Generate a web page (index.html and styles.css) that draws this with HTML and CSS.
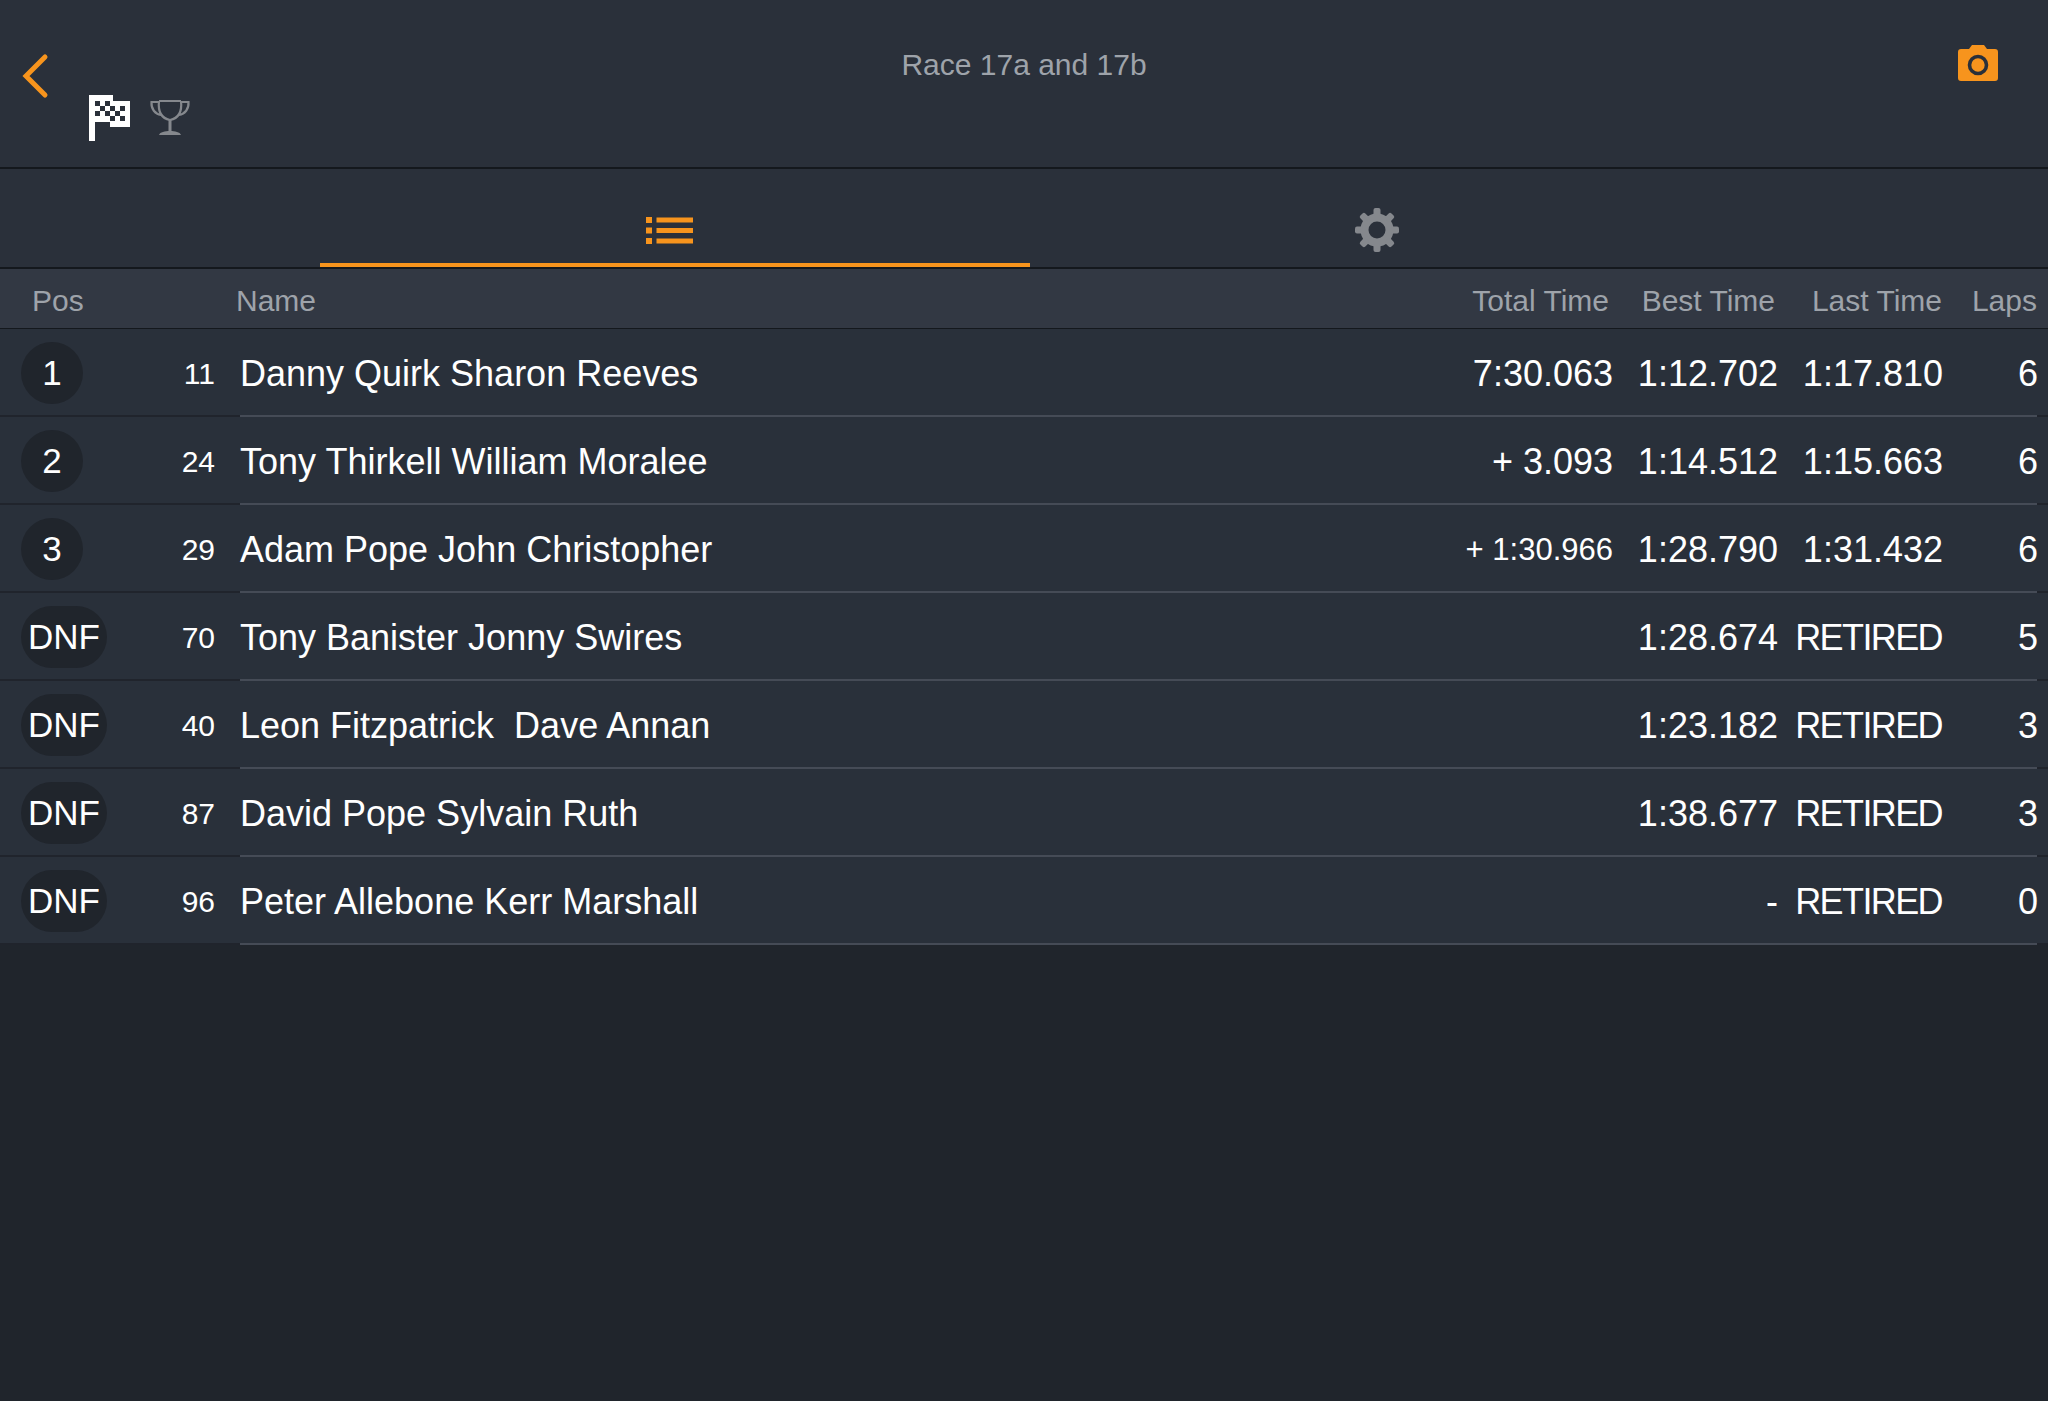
FILE: index.html
```html
<!DOCTYPE html>
<html lang="en">
<head>
<meta charset="utf-8">
<title>Race 17a and 17b</title>
<link rel="stylesheet" href="styles.css">
</head>
<body>
<header class="topbar">
  <svg class="back" width="30" height="48" viewBox="0 0 30 48"><path d="M24 5 L5 24 L24 43" fill="none" stroke="#f7941d" stroke-width="5" stroke-linecap="round" stroke-linejoin="miter"/></svg>
  <div class="modes">
    <svg class="flag" width="41" height="46" viewBox="0 0 41 46" shape-rendering="crispEdges">
      <path fill="#fff" d="M0 0H24V6H41V32H21V27H6V46H0Z"/>
      <path fill="#2a303a" d="M6 6h5v5H6zM16 6h5v5h-5zM11 11h5v5h-5zM21 11h5v5h-5zM31 11h5v5h-5zM6 16h5v5H6zM16 16h5v5h-5zM26 16h5v5h-5zM21 21h5v5h-5zM31 21h5v5h-5z"/>
    </svg>
    <svg class="trophy" width="40" height="38" viewBox="0 0 40 38">
      <path fill="none" stroke="#85888d" stroke-width="2.2" d="M9 2H31M9 2C8 11 10 19 20 21C30 19 32 11 31 2M9 3H1.5C1 10 5 15 11 16M31 3H38.5C39 10 35 15 29 16"/>
      <path fill="#85888d" d="M18.500 21h3v11h-3zM9 36c1-3 6-4 11-4s10 1 11 4z"/>
    </svg>
  </div>
  <h1 class="title">Race 17a and 17b</h1>
  <svg class="camera" width="40" height="36" viewBox="0 0 40 36">
    <path fill="#f7941d" d="M3 4H11L14 0H26L29 4H37Q40 4 40 7V33Q40 36 37 36H3Q0 36 0 33V7Q0 4 3 4Z"/>
    <circle cx="20" cy="20" r="8.500" fill="none" stroke="#2a303a" stroke-width="3.600"/>
  </svg>
</header>

<nav class="tabs">
  <div class="tab tab-active">
    <svg width="48" height="28" viewBox="0 0 48 28"><path fill="#f7941d" d="M0 0h6v6H0zM10.500 .5h36.500v5H10.500zM0 10.500h6v6H0zM10.500 11h36.500v5H10.500zM0 21h6v6H0zM10.500 21.500h36.500v5H10.500z"/></svg>
  </div>
  <div class="tab tab-gear">
    <svg width="46" height="46" viewBox="0 0 46 46">
      <circle cx="23" cy="23" r="12.500" fill="none" stroke="#85888d" stroke-width="8"/>
      <g fill="#85888d">
        <rect x="19.500" y="1" width="7" height="8" rx="2"/>
        <rect x="19.500" y="1" width="7" height="8" rx="2" transform="rotate(45 23 23)"/>
        <rect x="19.500" y="1" width="7" height="8" rx="2" transform="rotate(90 23 23)"/>
        <rect x="19.500" y="1" width="7" height="8" rx="2" transform="rotate(135 23 23)"/>
        <rect x="19.500" y="1" width="7" height="8" rx="2" transform="rotate(180 23 23)"/>
        <rect x="19.500" y="1" width="7" height="8" rx="2" transform="rotate(225 23 23)"/>
        <rect x="19.500" y="1" width="7" height="8" rx="2" transform="rotate(270 23 23)"/>
        <rect x="19.500" y="1" width="7" height="8" rx="2" transform="rotate(315 23 23)"/>
      </g>
    </svg>
  </div>
</nav>

<div class="thead">
  <span class="th-pos">Pos</span>
  <span class="th-name">Name</span>
  <span class="th th-total">Total Time</span>
  <span class="th th-best">Best Time</span>
  <span class="th th-last">Last Time</span>
  <span class="th th-laps">Laps</span>
</div>

<main class="rows">
  <div class="row">
    <div class="lead"><span class="badge">1</span><span class="num">11</span></div>
    <div class="main"><span class="name">Danny Quirk Sharon Reeves</span><span class="c total">7:30.063</span><span class="c best">1:12.702</span><span class="c last">1:17.810</span><span class="c laps">6</span></div>
    <div class="tail"></div>
  </div>
  <div class="row">
    <div class="lead"><span class="badge">2</span><span class="num">24</span></div>
    <div class="main"><span class="name">Tony Thirkell William Moralee</span><span class="c total">+ 3.093</span><span class="c best">1:14.512</span><span class="c last">1:15.663</span><span class="c laps">6</span></div>
    <div class="tail"></div>
  </div>
  <div class="row">
    <div class="lead"><span class="badge">3</span><span class="num">29</span></div>
    <div class="main"><span class="name">Adam Pope John Christopher</span><span class="c total small">+ 1:30.966</span><span class="c best">1:28.790</span><span class="c last">1:31.432</span><span class="c laps">6</span></div>
    <div class="tail"></div>
  </div>
  <div class="row">
    <div class="lead"><span class="badge">DNF</span><span class="num">70</span></div>
    <div class="main"><span class="name">Tony Banister Jonny Swires</span><span class="c total"></span><span class="c best">1:28.674</span><span class="c last retired">RETIRED</span><span class="c laps">5</span></div>
    <div class="tail"></div>
  </div>
  <div class="row">
    <div class="lead"><span class="badge">DNF</span><span class="num">40</span></div>
    <div class="main"><span class="name">Leon Fitzpatrick  Dave Annan</span><span class="c total"></span><span class="c best">1:23.182</span><span class="c last retired">RETIRED</span><span class="c laps">3</span></div>
    <div class="tail"></div>
  </div>
  <div class="row">
    <div class="lead"><span class="badge">DNF</span><span class="num">87</span></div>
    <div class="main"><span class="name">David Pope Sylvain Ruth</span><span class="c total"></span><span class="c best">1:38.677</span><span class="c last retired">RETIRED</span><span class="c laps">3</span></div>
    <div class="tail"></div>
  </div>
  <div class="row">
    <div class="lead"><span class="badge">DNF</span><span class="num">96</span></div>
    <div class="main"><span class="name">Peter Allebone Kerr Marshall</span><span class="c total"></span><span class="c best">-</span><span class="c last retired">RETIRED</span><span class="c laps">0</span></div>
    <div class="tail"></div>
  </div>
</main>
```

FILE: styles.css
```css
* { box-sizing: border-box; }
html, body { margin: 0; height: 100%; }
body {
  height: 1401px;
  overflow: hidden;
  background: #20252c;
  font-family: "Liberation Sans", Arial, sans-serif;
  color: #fff;
}

/* top bar */
.topbar {
  position: relative;
  height: 169px;
  background: #2a303a;
  border-bottom: 2px solid #14181d;
  display: flex;
  align-items: flex-start;
}
.back { margin: 52px 0 0 21px; flex: none; }
.modes { display: flex; align-items: flex-start; margin: 95px 0 0 38px; gap: 20px; flex: none; }
.trophy { margin-top: 4px; }
.title {
  position: absolute;
  left: 0; right: 0; top: 47px;
  margin: 0;
  text-align: center;
  font-size: 30px;
  line-height: 36px;
  font-weight: 400;
  color: #9ea3aa;
}
.camera { position: absolute; left: 1958px; top: 45px; }

/* tabs */
.tabs {
  height: 100px;
  background: #2a303a;
  border-bottom: 2px solid #14181d;
  display: flex;
  padding-left: 320px;
}
.tab { display: flex; align-items: center; justify-content: center; flex: none; height: 98px; }
.tab-active { width: 710px; border-bottom: 4px solid #f7941d; padding: 30px 10px 0 0; }
.tab-gear { width: 693px; padding-top: 23px; }

/* table head */
.thead {
  height: 60px;
  padding-top: 4px;
  background: #323843;
  border-bottom: 1px solid #14181d;
  display: flex;
  align-items: center;
  color: #9ea3aa;
  font-size: 30px;
}
.th-pos { margin-left: 32px; width: 204px; flex: none; }
.th-name { flex: 1; }
.th { flex: none; text-align: right; }
.th-total { width: 300px; }
.th-best { width: 166px; }
.th-last { width: 167px; }
.th-laps { width: 95px; margin-right: 11px; }

/* rows */
.row {
  height: 88px;
  display: flex;
  background: #29303a;
}
.lead {
  width: 240px;
  flex: none;
  display: flex;
  align-items: center;
  padding-left: 21px;
  border-bottom: 2px solid #20242c;
  position: relative;
}
.badge {
  min-width: 62px;
  height: 62px;
  margin-top: 2px;
  border-radius: 31px;
  background: #20252c;
  font-size: 35px;
  line-height: 62px;
  text-align: center;
  padding: 0 7px;
}
.num {
  position: absolute;
  right: 25px;
  top: 2px;
  line-height: 86px;
  font-size: 30px;
}
.main {
  flex: 1;
  display: flex;
  align-items: center;
  padding-top: 3px;
  border-bottom: 2px solid #454b56;
  font-size: 36px;
}
.tail { width: 11px; flex: none; border-bottom: 2px solid #20242c; }
.name { flex: 1; white-space: pre; }
.c { flex: none; text-align: right; }
.total { width: 300px; }
.small { font-size: 31px; }
.best { width: 165px; }
.last { width: 165px; }
.laps { width: 95px; margin-right: -1px; }
.retired { letter-spacing: -1.6px; padding-right: 1px; }
```
